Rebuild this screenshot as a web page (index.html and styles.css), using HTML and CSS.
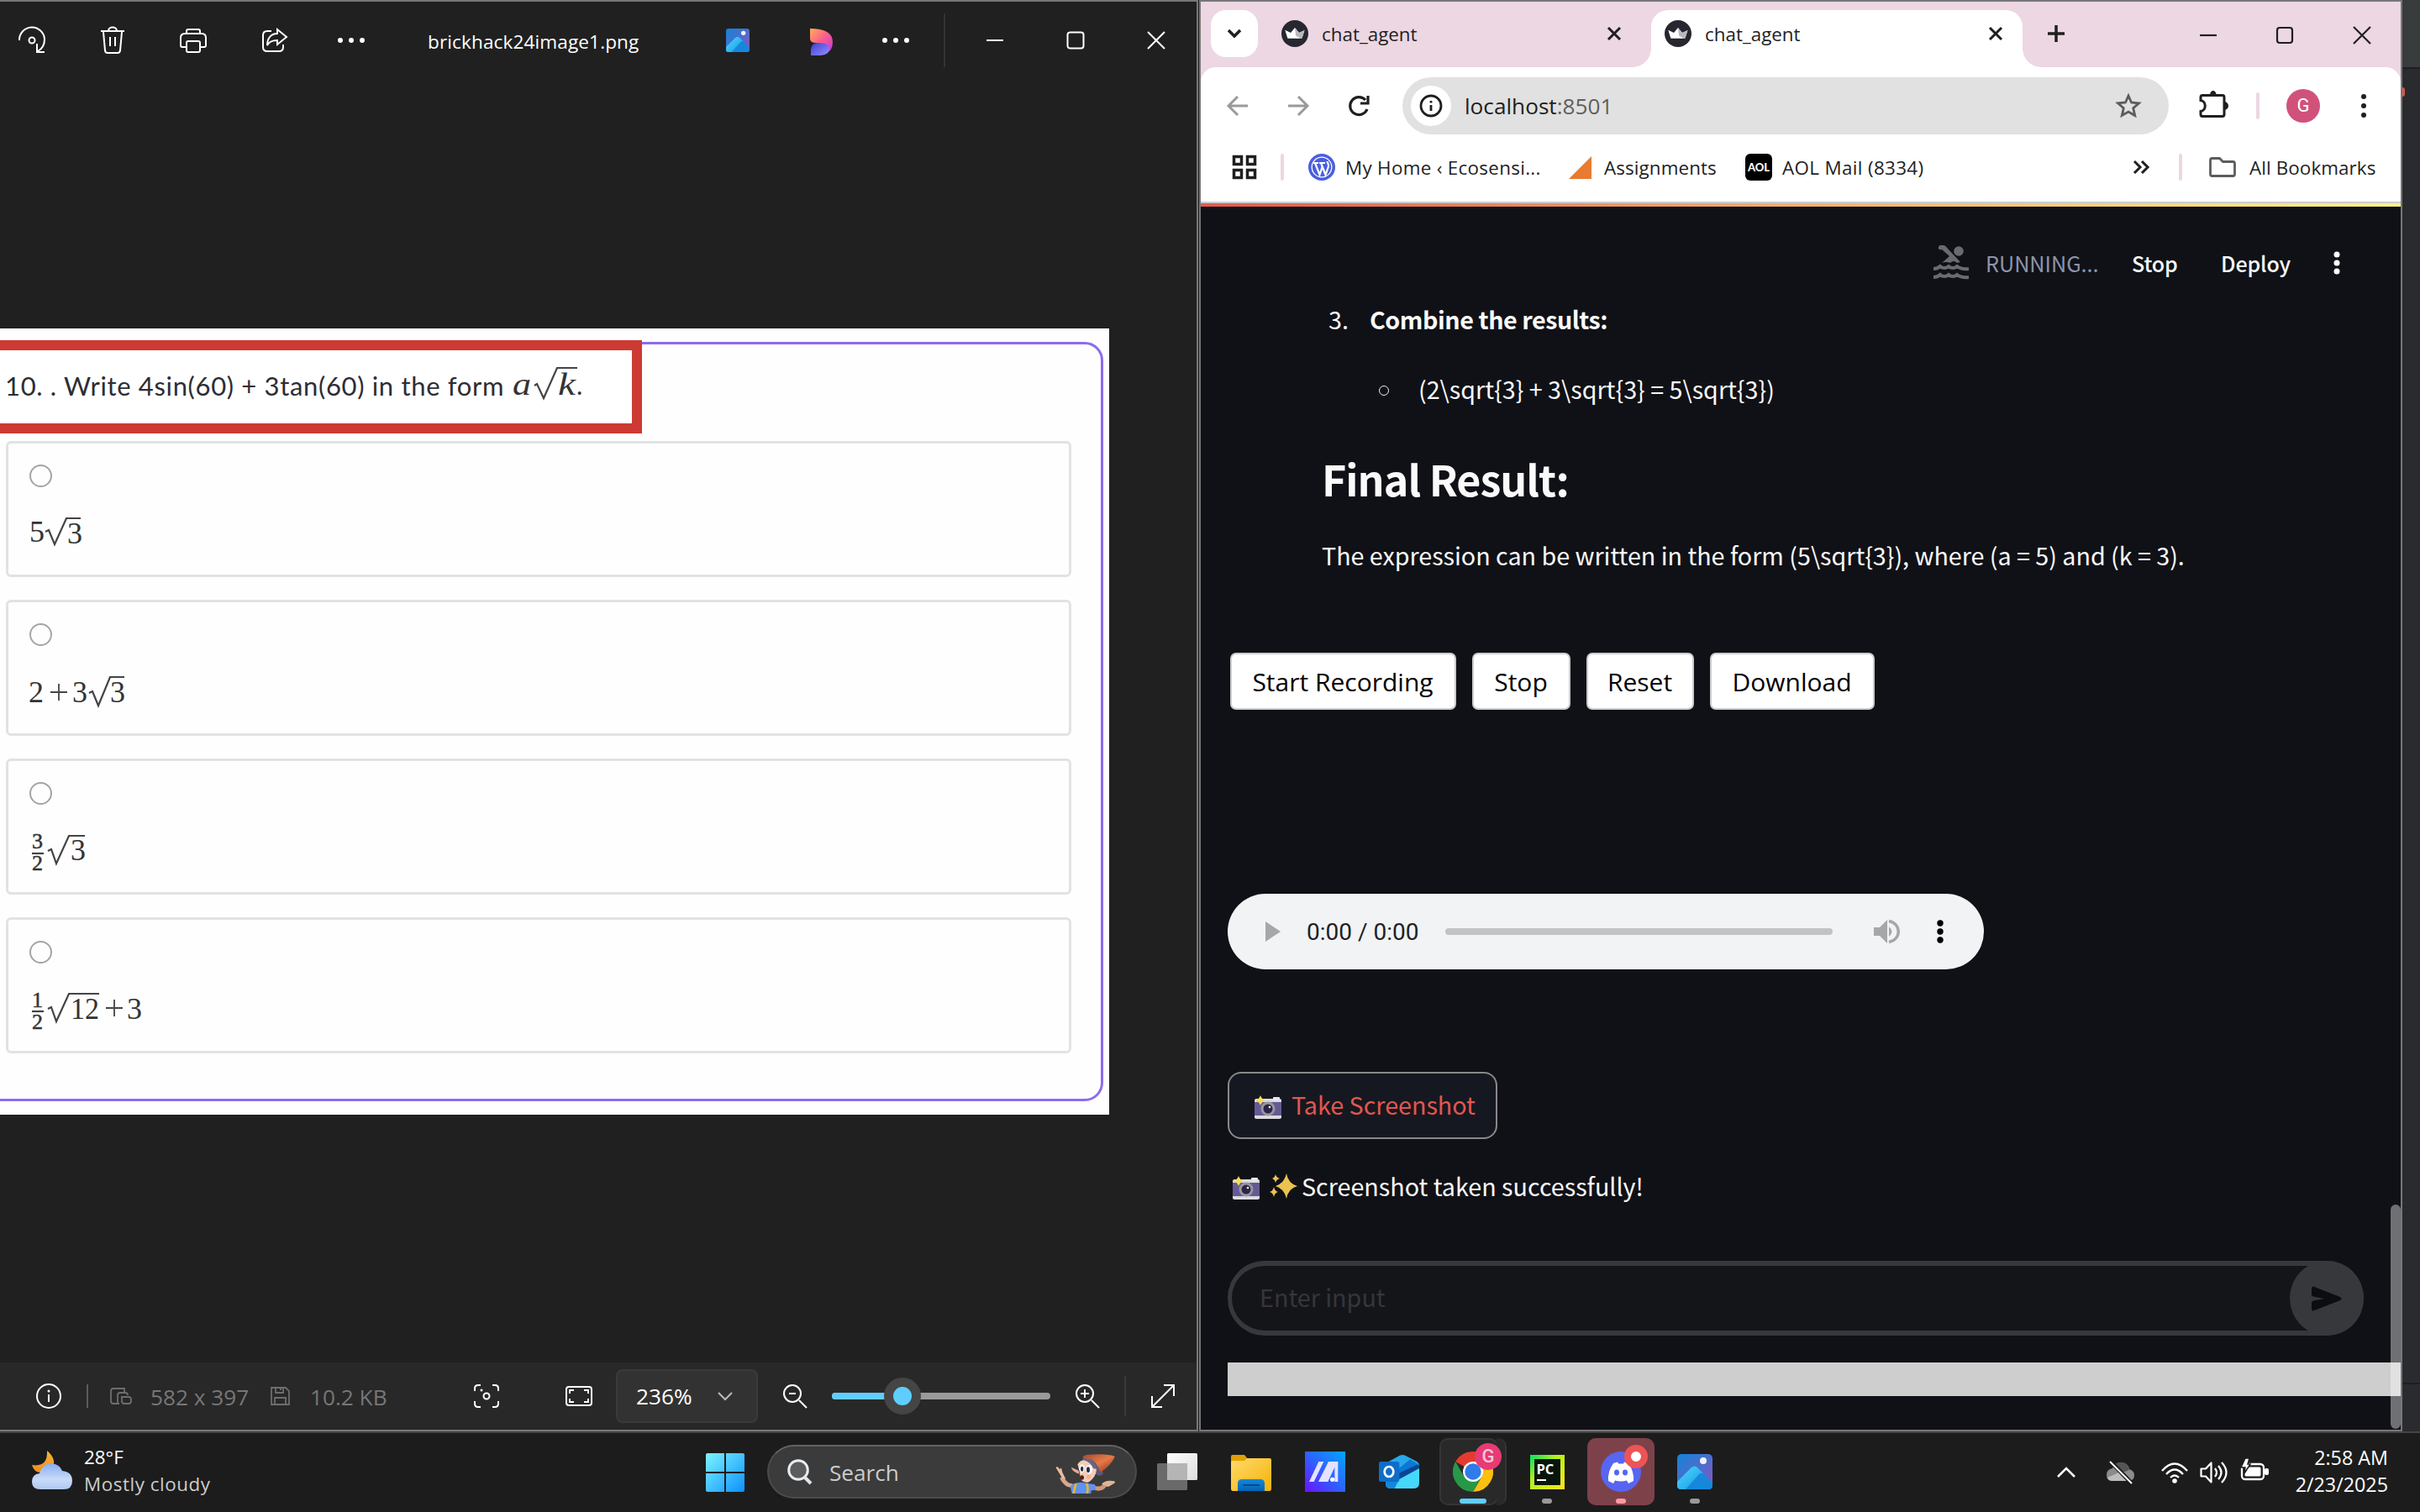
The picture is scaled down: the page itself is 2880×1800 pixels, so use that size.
FILE: index.html
```
<!DOCTYPE html>
<html lang="en">
<head>
<meta charset="utf-8">
<title>Desktop</title>
<link rel="stylesheet" href="styles.css">
</head>
<body>
<svg class="defs" width="0" height="0" aria-hidden="true">
  <defs>
    <linearGradient id="gPhoto" x1="0" y1="0" x2="1" y2="1"><stop offset="0" stop-color="#1184d8"/><stop offset="1" stop-color="#8a55c0"/></linearGradient>
    <linearGradient id="gHill" x1="0" y1="0" x2="1" y2="1"><stop offset="0" stop-color="#4fdcff"/><stop offset="1" stop-color="#1595e6"/></linearGradient>
    <linearGradient id="gWarm" x1="0" y1="0" x2="1" y2="1"><stop offset="0" stop-color="#ffae57"/><stop offset=".5" stop-color="#fb5c8c"/><stop offset="1" stop-color="#b836e8"/></linearGradient>
    <linearGradient id="gCool" x1="0" y1="0" x2="1" y2="1"><stop offset="0" stop-color="#3a3fd0"/><stop offset="1" stop-color="#9a8dff"/></linearGradient>
    <linearGradient id="gWin" gradientUnits="userSpaceOnUse" x1="0" y1="0" x2="46" y2="46"><stop offset="0" stop-color="#7df3ff"/><stop offset="1" stop-color="#0a92ff"/></linearGradient>
    <linearGradient id="gMoon" x1="0" y1="0" x2="0" y2="1"><stop offset="0" stop-color="#f2b93a"/><stop offset="1" stop-color="#f08a1c"/></linearGradient>
    <linearGradient id="gCloud" x1="0" y1="0" x2="0" y2="1"><stop offset="0" stop-color="#86aef0"/><stop offset=".6" stop-color="#c9dbf8"/><stop offset="1" stop-color="#b0c8f2"/></linearGradient>
    <linearGradient id="gFolder" x1="0" y1="0" x2="1" y2="1"><stop offset="0" stop-color="#ffda6b"/><stop offset="1" stop-color="#f5b20a"/></linearGradient>
    <linearGradient id="gPad" x1="0" y1="0" x2="0" y2="1"><stop offset="0" stop-color="#1488dc"/><stop offset="1" stop-color="#0463b5"/></linearGradient>
    <linearGradient id="gAsus" x1="0" y1="1" x2="1" y2="0"><stop offset="0" stop-color="#6a12ff"/><stop offset=".5" stop-color="#2e62ff"/><stop offset="1" stop-color="#00a8ff"/></linearGradient>
    <linearGradient id="gHat" x1="0" y1="0" x2="1" y2="1"><stop offset="0" stop-color="#a34a2a"/><stop offset=".5" stop-color="#e57a4a"/><stop offset="1" stop-color="#8c2c10"/></linearGradient>
    <linearGradient id="gPane" x1="0" y1="0" x2="1" y2="1"><stop offset="0" stop-color="#ffffff"/><stop offset="1" stop-color="#dddddd"/></linearGradient>
    <symbol id="crown" viewBox="0 0 32 32"><circle cx="16" cy="16" r="16" fill="#262730"/><path d="M4.5 12l6.5 3L16 9l5 6 6.5-3-3 9.5h-17z" fill="#fff"/><path d="M16 9l5 6 6.5-3-3 9.5h-7z" fill="#b9b9bd"/><path d="M4.5 12l18 9.500h-15z" fill="#fff"/></symbol>
    <symbol id="pic" viewBox="0 0 42 42"><g stroke="none"><rect width="42" height="42" rx="5" fill="url(#gPhoto)"/><circle cx="31" cy="8" r="4" fill="#f0f4fa"/><path d="M0 34L17 16q4-3 7 0l18 18v4q0 4-5 4H5q-5 0-5-4z" fill="#1688dc"/><path d="M0 33L17 16q4-3 7 0l7 7q-3-1-5 1L10 42H5q-5 0-5-4z" fill="url(#gHill)"/></g></symbol>
    <symbol id="cam" viewBox="0 0 32 28"><rect y="4" width="32" height="24" rx="2" fill="#dcdbe0"/><rect x="22" y="2" width="8" height="4" rx="1" fill="#e8e8ea"/><rect y="8" width="32" height="16" fill="#655a96"/><circle cx="16" cy="16" r="8.500" fill="#98979c"/><circle cx="16" cy="16" r="5.500" fill="#2c2547"/><circle cx="18" cy="14" r="1.300" fill="#fff"/><path d="M7 0q1.500 4.500 6 6-4.500 1.500-6 6-1.500-4.500-6-6 4.500-1.500 6-6z" fill="#f6da5f"/></symbol>
  </defs>
</svg>

<div class="desktop">
  <section class="photos">
    <header class="ph-title">
      <svg class="ic" viewBox="-24 -24 48 48"><path d="M-15 0A15 15 0 0 1 15-1C15 5 12 10 7 13M6 4v10h9"/><circle r="3.500"/></svg>
      <svg class="ic" viewBox="-24 -24 48 48"><path d="M-14-11h28M-5-11c0-6 10-6 10 0M-11-10l2 22q.5 3 3 3H6q2.500 0 3-3l2-22M-3-4V7M3-4V7"/></svg>
      <svg class="ic" viewBox="-24 -24 48 48"><path d="M-8-8v-3q0-2 2-2H6q2 0 2 2v3M-8 8h-5q-2 0-2-2v-9q0-5 5-5H10q5 0 5 5v9q0 2-2 2H8"/><rect x="-8" y="1" width="16" height="13" rx="2"/></svg>
      <svg class="ic" viewBox="-24 -24 48 48"><path d="M-3-11h-5q-5 0-5 5V8q0 5 5 5H6q5 0 5-5V5M4-13L15-4 4 5V0C-2 0-6 2-8 6-8-2-4-8 4-8z"/></svg>
      <svg class="ic m-dots" viewBox="-24 -24 48 48"><g class="solid"><circle cx="-13" r="3"/><circle r="3"/><circle cx="13" r="3"/></g></svg>
      <span class="ph-name">brickhack24image1.png</span>
      <svg class="ic m-pic" viewBox="-24 -24 48 48"><use href="#pic" x="-14" y="-14" width="28" height="28"/></svg>
      <svg class="ic m-des" viewBox="-24 -24 48 48"><path stroke="none" fill="url(#gWarm)" d="M-13-14Q14-14 14 2q0 11-8 13Q4 4-6 3q-7 0-7-5z"/><path stroke="none" fill="url(#gCool)" d="M-12 18V12Q-12 3-3 3 10 3 10 10 10 18-4 18z"/></svg>
      <svg class="ic m-dots2" viewBox="-24 -24 48 48"><g class="solid"><circle cx="-13" r="3"/><circle r="3"/><circle cx="13" r="3"/></g></svg>
      <i class="vline"></i>
      <svg class="ic m-min" viewBox="-24 -24 48 48"><path d="M-10 0H10"/></svg>
      <svg class="ic m-max" viewBox="-24 -24 48 48"><rect x="-9.500" y="-9.500" width="19" height="19" rx="3"/></svg>
      <svg class="ic m-cls" viewBox="-24 -24 48 48"><path d="M-10-10L10 10M10-10L-10 10"/></svg>
    </header>

    <div class="canvas">
      <div class="sheet">
        <div class="frame"></div>
        <div class="question"><span class="q-text">10. . Write 4sin(60) + 3tan(60) in the form</span><svg class="math" width="90" height="60" viewBox="608 430 90 60"><text class="it" x="610" y="471" textLength="22" lengthAdjust="spacingAndGlyphs">a</text><path d="M636 460l3-2 8 17 16-36h24" /><text class="it" x="664" y="471" textLength="21" lengthAdjust="spacingAndGlyphs">k</text><text x="686" y="471" class="dot">.</text></svg></div>
        <div class="choices">
          <div class="choice"><i class="radio"></i><svg class="math" width="200" height="70" viewBox="30 608 200 70"><text x="35" y="646">5</text><path d="M54 634l4-2 7 17 14-31h17"/><text x="80" y="648">3</text></svg></div>
          <div class="choice"><i class="radio"></i><svg class="math" width="200" height="70" viewBox="30 797 200 70"><text x="34" y="837">2</text><path class="plus" d="M60 825h20M70 815v20"/><text x="86" y="837">3</text><path d="M106 826l4-2 7 17 14-34h17"/><text x="131" y="837">3</text></svg></div>
          <div class="choice"><i class="radio"></i><svg class="math" width="200" height="70" viewBox="30 986 200 70"><text class="sm" x="38" y="1011">3</text><path d="M38 1017h14"/><text class="sm" x="38" y="1037">2</text><path d="M57 1014l4-2 6 17 15-33h19"/><text x="84" y="1025">3</text></svg></div>
          <div class="choice"><i class="radio"></i><svg class="math" width="200" height="70" viewBox="30 1175 200 70"><text class="sm" x="38" y="1200">1</text><path d="M38 1205h14"/><text class="sm" x="38" y="1226">2</text><path d="M57 1202l4-2 6 17 15-33h36"/><text x="84" y="1214" textLength="34" lengthAdjust="spacingAndGlyphs">12</text><path class="plus" d="M126 1201h20M136 1191v20"/><text x="151" y="1214">3</text></svg></div>
        </div>
      </div>
    </div>

    <footer class="ph-bar">
      <svg class="ic" viewBox="-24 -24 48 48"><circle r="14"/><path d="M0-2V7"/><circle class="solid" cy="-6" r="1.500"/></svg>
      <i class="vline a"></i>
      <svg class="ic dim b" viewBox="-24 -24 48 48"><path d="M-2 9h-7q-3 0-3-3V-6q0-3 3-3H4v5M-4 9V-1q0-3 3-3H5q3 0 3 3M1 1h8q3 0 3 3v2q0 3-3 3H4q-3 0-3-3z"/></svg>
      <span class="dimtext w1">582 x 397</span>
      <svg class="ic dim c" viewBox="-24 -24 48 48"><path d="M-10-10H7l4 4V10h-21zM-6 10V2H7v8M-5-10v6H4v-6M1-10v3"/></svg>
      <span class="dimtext w2">10.2 KB</span>
      <svg class="ic d" viewBox="-24 -24 48 48"><path d="M-14-6v-3q0-4 4-4h3M7-13h3q4 0 4 4v3M14 6v3q0 4-4 4H7M-7 13h-3q-4 0-4-4V6"/><circle r="3.500"/><circle class="solid" cx="-6" cy="-7" r="1.500"/></svg>
      <svg class="ic e" viewBox="-24 -24 48 48"><rect x="-15" y="-11" width="30" height="22" rx="3"/><path d="M-11-3v-4h5M6-7h5v4M11 3v4H6M-6 7h-5V3"/></svg>
      <div class="zoom"><span>236%</span><svg width="18" height="12" viewBox="0 0 18 12"><path d="M1 2l8 8 8-8" fill="none" stroke="#bbb" stroke-width="2"/></svg></div>
      <svg class="ic f" viewBox="-24 -24 48 48"><circle cx="-3" cy="-3" r="10"/><path d="M5 5l9 9M-7-3h8"/></svg>
      <div class="slider"><i class="fill"></i><i class="thumb"></i></div>
      <svg class="ic g" viewBox="-24 -24 48 48"><circle cx="-3" cy="-3" r="10"/><path d="M5 5l9 9M-8-3h10M-3-8v10"/></svg>
      <i class="vline h"></i>
      <svg class="ic k" viewBox="-24 -24 48 48"><path d="M-13 13L13-13M1-13h12V0M-13 0v13h12"/></svg>
    </footer>
  </section>

  <section class="chrome">
    <div class="tabs">
      <div class="tabmenu"><svg width="20" height="14" viewBox="0 0 20 14"><path d="M3 3l7 7 7-7" fill="none" stroke="#1f1f1f" stroke-width="3.500"/></svg></div>
      <div class="tab idle"><svg class="fav"><use href="#crown"/></svg><span>chat_agent</span><svg class="x" viewBox="-9 -9 18 18"><path d="M-7-7L7 7M7-7L-7 7"/></svg></div>
      <div class="tab active"><svg class="fav"><use href="#crown"/></svg><span>chat_agent</span><svg class="x" viewBox="-9 -9 18 18"><path d="M-7-7L7 7M7-7L-7 7"/></svg></div>
      <svg class="ck t1" viewBox="-24 -24 48 48"><path d="M-10 0H10M0-10V10" stroke-width="3.500"/></svg>
      <svg class="ck t2" viewBox="-24 -24 48 48"><path d="M-10 1H10"/></svg>
      <svg class="ck t3" viewBox="-24 -24 48 48"><rect x="-9" y="-8" width="18" height="18" rx="3"/></svg>
      <svg class="ck t4" viewBox="-24 -24 48 48"><path d="M-10-9L10 11M10-9L-10 11"/></svg>
    </div>
    <div class="toolbar">
      <svg class="ck n1" viewBox="-24 -24 48 48"><path stroke="#9a9a9a" stroke-width="3" d="M12 0H-10M0-11L-11 0 0 11"/></svg>
      <svg class="ck n2" viewBox="-24 -24 48 48"><path stroke="#9a9a9a" stroke-width="3" d="M-12 0H10M0-11L11 0 0 11"/></svg>
      <svg class="ck n3" viewBox="-24 -24 48 48"><path stroke-width="3.200" d="M10 4A10.500 10.500 0 1 1 8-7M11-12v9H2"/></svg>
      <div class="omnibox">
        <div class="site"><svg class="ck" viewBox="-24 -24 48 48"><circle r="12" stroke-width="2.800"/><path stroke-width="2.800" d="M0-1V6M0-6v2.500"/></svg></div>
        <span class="url">localhost<em>:8501</em></span>
        <svg class="ck star" viewBox="-24 -24 48 48"><path stroke="#5c5c5c" stroke-width="2.800" d="M0-12l3.500 8 9 .8-6.800 6 2 8.700L0 7l-7.700 4.500 2-8.700-6.800-6 9-.8z"/></svg>
      </div>
      <svg class="ck n4" viewBox="-24 -24 48 48"><path stroke-width="3" d="M-15-10q0-2.500 2-2.500h24q2 0 2 2.500V10q0 2.500-2 2.500h-24q-2 0-2-2.500V6.500c7-1 7-12 0-13z"/><path class="fillk" d="M-4-13a3.800 5 0 0 1 7.600 0zM13-5a5 5 0 0 1 0 10z"/></svg>
      <i class="pink p1"></i>
      <span class="avatar">G</span>
      <svg class="ck n5" viewBox="-24 -24 48 48"><g class="fillk"><circle cy="-11" r="3"/><circle r="3"/><circle cy="11" r="3"/></g></svg>
    </div>
    <div class="marks">
      <svg class="ck b1" viewBox="-24 -24 48 48"><path stroke-width="3.500" d="M-12.500-12.500h9v9h-9zM3.500-12.500h9v9h-9zM-12.500 3.500h9v9h-9zM3.500 3.500h9v9h-9z"/></svg>
      <i class="pink p2"></i>
      <svg class="b2" width="32" height="32" viewBox="0 0 32 32"><circle cx="16" cy="16" r="16" fill="#4a5fe0"/><circle cx="16" cy="16" r="11.800" fill="none" stroke="#fff" stroke-width="1.300"/><path d="M6 11h6M13 11h7M8 11l5.500 14L16.500 16M15 11l5.500 14L24 15c.6-3-1.500-3.500-1.500-6" fill="none" stroke="#fff" stroke-width="2.200"/></svg>
      <span class="bw1">My Home ‹ Ecosensi...</span>
      <svg class="b3" width="27" height="27" viewBox="0 0 27 27"><path d="M27 0v27H0z" fill="#e87b2f"/></svg>
      <span class="bw2">Assignments</span>
      <span class="aol">AOL</span>
      <span class="bw3">AOL Mail (8334)</span>
      <svg class="ck b4" viewBox="-24 -24 48 48"><path stroke-width="3" d="M-8-7l7 7-7 7M1-7l7 7-7 7"/></svg>
      <i class="pink p3"></i>
      <svg class="ck b5" viewBox="-24 -24 48 48"><path stroke="#5c5c5c" stroke-width="2.800" d="M-14.500-8q0-2.500 2-2.500h9l4 4h12q2 0 2 2.500V8q0 2.500-2 2.500h-25q-2 0-2-2.500z"/></svg>
      <span class="bw4">All Bookmarks</span>
    </div>
    <div class="page">
      <div class="status">
        <svg class="swim" width="44" height="42" viewBox="0 0 44 42"><circle cx="31" cy="7" r="5.800" fill="#6a6b70"/><path d="M9 0q6-1 8 3l16 17-4 1q-4-4-8 0-5-2-10 0l9-8-9-8q-5 1-4-3 1-2 2-2z" fill="#6a6b70"/><path d="M1 28q5 0 8-3 5 4 10 0 5 4 10 0 5 4 14 3M1 38q5 0 8-3 5 4 10 0 5 4 10 0 5 4 14 3" stroke="#6a6b70" stroke-width="4" fill="none"/></svg>
        <span class="run">RUNNING...</span>
        <span class="st1">Stop</span>
        <span class="st2">Deploy</span>
        <svg class="kebab" width="8" height="28" viewBox="0 0 8 28"><g fill="#fff"><circle cx="4" cy="4" r="3.500"/><circle cx="4" cy="14" r="3.500"/><circle cx="4" cy="24" r="3.500"/></g></svg>
      </div>
      <div class="li"><span class="num">3.</span><b>Combine the results:</b></div>
      <div class="li sub"><i class="ring"></i><span>(2\sqrt{3} + 3\sqrt{3} = 5\sqrt{3})</span></div>
      <h2>Final Result:</h2>
      <p class="para">The expression can be written in the form (5\sqrt{3}), where (a = 5) and (k = 3).</p>
      <div class="buttons"><button class="q1">Start Recording</button><button class="q2">Stop</button><button class="q3">Reset</button><button class="q4">Download</button></div>
      <div class="audio">
        <svg class="play" width="18" height="24" viewBox="0 0 18 24"><path d="M0 0l18 12L0 24z" fill="#a5a7a8"/></svg>
        <span>0:00 / 0:00</span><i class="track"></i>
        <svg class="vol" width="31" height="30" viewBox="0 0 31 30"><path d="M0 10h7l9-9v28l-9-9H0z" fill="#a5a7a8"/><path d="M18 9q7 6 0 12z" fill="#a5a7a8"/><path d="M18 2.500c15 3 15 22 0 25" stroke="#a5a7a8" stroke-width="3.500" fill="none"/></svg>
        <svg class="ad" width="8" height="28" viewBox="0 0 8 28"><circle cx="4" cy="4" r="3.700"/><circle cx="4" cy="14" r="3.700"/><circle cx="4" cy="24" r="3.700"/></svg>
      </div>
      <div class="shot"><svg class="cam"><use href="#cam"/></svg><span>Take Screenshot</span></div>
      <div class="done"><svg class="cam"><use href="#cam"/></svg><svg class="spark" width="33" height="30" viewBox="0 0 33 30"><path d="M20 0q2 12 13 15-11 3-13 15-3-12-13-15 10-3 13-15zM7 1q1 4 5 5-4 1-5 5-1-4-4-5 3-1 4-5zM5 16q1 5 5 6-4 1-5 6-1-5-5-6 4-1 5-6z" fill="#ecc351"/></svg><span>Screenshot taken successfully!</span></div>
      <div class="input"><span>Enter input</span><div class="send"><svg width="36" height="30" viewBox="0 0 36 30"><path d="M2 0.500L34 13q3 2 0 4L2 29.500q-2 0-2-3V20q0-2 2-2.500L15 15 2 12.500Q0 12 0 10V3.500q0-3 2-3z" fill="#0c0d11"/></svg></div></div>
      <div class="strip"></div>
      <i class="scroll"></i>
    </div>
  </section>
  <aside class="behind"><i class="red"></i></aside>

  <nav class="taskbar">
    <svg class="weather" width="48" height="46" viewBox="0 0 48 46"><path d="M18 0Q32 12 22 24L12 26Q3 27 0 17 19 20 18 0z" fill="url(#gMoon)"/><path d="M10 46Q0 46 0 37q0-9 9-10Q12 15 23 15.500q10 0 13 8.500 12 1 12 12 0 10-10 10z" fill="url(#gCloud)"/></svg>
    <div class="wtext"><span>28°F</span><span class="sub2">Mostly cloudy</span></div>
    <svg class="start" width="46" height="46" viewBox="0 0 46 46"><path fill="url(#gWin)" d="M2 0h20v22H0V2q0-2 2-2zM24 0h20q2 0 2 2v20H24zM0 24h22v22H2q-2 0-2-2zM24 24h22v20q0 2-2 2H24z"/></svg>
    <div class="search">
      <svg class="mag" width="30" height="31" viewBox="0 0 30 31"><circle cx="13" cy="13" r="11.300" fill="#5a5c5e" stroke="#e8ecf0" stroke-width="3"/><path d="M21 22l7 7" stroke="#e0e5ea" stroke-width="4"/></svg>
      <span>Search</span>
      <svg class="puppet" width="74" height="48" viewBox="20 72 222 144">
        <path d="M88 190L66 184Q50 172 46 158" stroke="#d8a68c" stroke-width="15" fill="none"/><path d="M48 162L24 122q10-4 14 8l6-6 4 16 12 24z" fill="#e8bda2"/>
        <path d="M160 194q24 12 40-8l20-8" stroke="#cf977c" stroke-width="15" fill="none"/><path d="M188 182q14-16 46-10l2 6-24 14z" fill="#e3b497"/>
        <path d="M76 190q14-14 40-14l48 8 4 18-18 4v10H82z" fill="#5f92f2"/>
        <path d="M96 180l-8 36M134 180q8 16 2 36" stroke="#f0b429" stroke-width="8" fill="none"/>
        <path d="M120 90q36-10 64 20l10 36q-16 12-24 2z" fill="#5d5678"/>
        <path d="M102 112q10-18 34-16 30 6 34 34-2 30-30 46-26 2-28-20l-4-24z" fill="#f2cdb8"/><path d="M106 134l-26-12q0 14 28 24z" fill="#eaa793"/>
        <ellipse cx="118" cy="127" rx="9" ry="15" fill="#fff"/><ellipse cx="143" cy="130" rx="12" ry="16" fill="#fff"/><ellipse cx="118" cy="128" rx="5" ry="9" fill="#27304a"/><ellipse cx="140" cy="131" rx="6" ry="10" fill="#27304a"/>
        <ellipse cx="118" cy="159" rx="7" ry="8" fill="#5a1f14"/><circle cx="142" cy="157" r="8" fill="#f5a090" opacity=".6"/>
        <path d="M120 84q6 12 30 10 20 8 34 46Q220 118 236 84 210 72 132 78z" fill="url(#gHat)"/><path d="M120 90q24 2 34 6 14 14 20 34l-16-4q-8-22-36-30z" fill="#6b6488"/>
      </svg>
    </div>
    <svg class="view" width="48" height="44" viewBox="0 0 48 44"><rect x="12" width="36" height="32" rx="1.500" fill="url(#gPane)"/><rect y="12" width="36" height="32" rx="1.500" fill="#6a6a6a"/><path d="M12 12h24v20H12z" fill="#b5b5b5"/></svg>
    <svg class="expl" width="48" height="43" viewBox="0 0 48 43"><path d="M0 2q0-2 2-2h14l4 5v6H0z" fill="#e0a000"/><path d="M0 9q0-2 2-2h14l3-3h27q2 0 2 2v34q0 3-2 3H2q-2 0-2-3z" fill="url(#gFolder)"/><path d="M8 43V34q0-5 5-5h22q5 0 5 5v9z" fill="url(#gPad)"/><path d="M14 36h20" stroke="#06468a" stroke-width="2"/></svg>
    <svg class="asus" width="48" height="48" viewBox="909 66 144 144"><path d="M909 66h144v144H909z" fill="url(#gAsus)"/><path d="M924 174l34-72h18l-35 72zM957 174l36-72h34v72h-12V122l-24 52z" fill="#e3e2ff"/><circle cx="1007" cy="166" r="8" fill="#fff"/></svg>
    <svg class="outl" width="48" height="40" viewBox="1173 78 144 120"><path d="M1197 108l50-28q10-4 20 0l42 22q8 5 8 14l-60 34-60 30z" fill="#28a8ea"/><path d="M1238 132l46-38 28 18-70 48z" fill="#0a78d4"/><path d="M1238 146l74-34q12 12-4 24l-62 40z" fill="#0a4494"/><path d="M1197 160l50 4 70-38v52q0 20-18 20h-84q-18 0-18-18z" fill="#45d8fa"/><path d="M1197 170h46l-14 28h-14q-18 0-18-18z" fill="#1487dc"/><rect x="1173" y="102" width="73" height="72" rx="6" fill="#0f6cc8"/><ellipse cx="1209" cy="138" rx="16" ry="18" fill="none" stroke="#fff" stroke-width="8"/></svg>
    <div class="tile chr"><i class="stack"></i>
      <svg width="48" height="48" viewBox="-24 -24 48 48"><path d="M0 0L-20.800-12A24 24 0 0 1 20.800-12z" fill="#e33b2e"/><path d="M0-12H20.800A24 24 0 0 1 0 24L10.400 6z" fill="#fdc010"/><path d="M-20.800-12L-10 7 10 6 0 24A24 24 0 0 1-20.800-12z" fill="#279847"/><circle r="12" fill="#fff"/><circle r="9.700" fill="#2f7be9"/></svg>
      <span class="badge">G</span><i class="under wide"></i></div>
    <div class="tile pyc"><div class="pc"><span>PC</span><i></i></div><i class="under"></i></div>
    <div class="tile disc">
      <svg width="48" height="48" viewBox="-24 -24 48 48"><circle r="24" fill="#5865f2"/><path d="M-9-10l5-1.500 1 2h6l1-2 5 1.500q7 10 6 21l-6 3-2-3.500q-7 2-14 0l-2 3.500-6-3q-1-11 6-21z" fill="#fff"/><ellipse cx="-5" cy="1" rx="3" ry="3.400" fill="#5865f2"/><ellipse cx="5" cy="1" rx="3" ry="3.400" fill="#5865f2"/></svg>
      <span class="live"></span><i class="under rose"></i></div>
    <div class="tile phs"><svg width="42" height="42"><use href="#pic"/></svg><i class="under"></i></div>
    <svg class="up" width="22" height="14" viewBox="0 0 22 14"><path d="M1 12L11 2l10 10" fill="none" stroke="#fff" stroke-width="2.500"/></svg>
    <svg class="cloud" width="34" height="32" viewBox="0 0 34 32"><path d="M7 26q-7 0-7-7 0-7 7-8Q10 4 17 4q8 0 10 8 6 2 6 7 0 7-7 7z" fill="#8b8b8b"/><path d="M7 26q-5 0-6-4l16-7 13 10-4 1z" fill="#bcbcbc"/><path d="M10 7q8-7 15 1l2 5-8 3z" fill="#555"/><path d="M4 2l26 27" stroke="#1c1c1c" stroke-width="5"/><path d="M4 3l26 26" stroke="#fff" stroke-width="2"/></svg>
    <svg class="wifi" width="34" height="26" viewBox="0 0 34 26"><path d="M2 11Q17-6 32 11M7 15q10-11 20 0M12 19q5-5 10 0" fill="none" stroke="#fff" stroke-width="2.300"/><circle cx="17" cy="23" r="2.800" fill="#fff"/></svg>
    <svg class="snd" width="34" height="28" viewBox="0 0 34 28"><path d="M1.500 9.500H7l6.500-7v23L7 18.500H1.500zM18 9q4 5 0 10M22 6q7 8 0 16M26 2q11 12 0 24" fill="none" stroke="#fff" stroke-width="2.200" stroke-linejoin="round"/></svg>
    <svg class="bat" width="34" height="28" viewBox="0 0 34 28"><rect x="2" y="7" width="26" height="18" rx="4" fill="none" stroke="#fff" stroke-width="2.300"/><rect x="5.500" y="10.500" width="19" height="11" rx="1.500" fill="#fff"/><rect x="29" y="12" width="5" height="8" rx="2" fill="#fff"/><path d="M6 0l5 0-2 7h3L5 18l1-7H1z" fill="#fff" stroke="#1c1c1c" stroke-width="1.500"/></svg>
    <div class="clock"><span>2:58 AM</span><span>2/23/2025</span></div>
  </nav>
</div>
</body>
</html>
```

FILE: styles.css
```
* { box-sizing: border-box; }
body { margin: 0; background: #1c1c1c; font-family: "Open Sans", "Noto Sans", sans-serif; overflow: hidden; }
svg { display: block; flex: none; }
i, em { font-style: normal; flex: none; }
span { white-space: nowrap; flex: none; }
.defs { position: absolute; }
.desktop { width: 2880px; height: 1800px; display: grid; grid-template-columns: 1427px 1432px 21px; grid-template-rows: 1704px 96px; }

/* Photos window */
.photos { width: 1426px; height: 1704px; background: #202020; border: solid #777; border-width: 2px 2px 2px 0; display: flex; flex-direction: column; }
.ic { width: 48px; height: 48px; fill: none; stroke: #fff; stroke-width: 2; }
.ic .solid { fill: #fff; stroke: none; }
.ic.dim { stroke: #6e6e6e; stroke-width: 1.800; }
.ph-title { height: 92px; display: flex; align-items: center; padding-left: 14px; }
.ph-title .ic:nth-child(-n+4) { margin-right: 48px; }
.ph-title .m-dots { margin-left: -4px; }
.ph-name { width: 250px; margin-left: 67px; padding-top: 3px; color: #fff; font-size: 22.600px; letter-spacing: .1px; line-height: 32px; }
.m-pic { margin-left: 95px; }
.m-des { margin-left: 51px; }
.m-dots2 { margin-left: 41px; }
.vline { width: 2px; height: 64px; background: #333; margin-left: 33px; }
.m-min { margin-left: 35px; }
.m-max { margin-left: 48px; }
.m-cls { margin-left: 48px; }
.canvas { height: 1528px; padding-top: 297px; }
.sheet { position: relative; width: 1320px; height: 936px; background: #fefefe; padding-top: 14px; }
.frame { position: absolute; left: -30px; top: 16px; width: 1343px; height: 904px; border: 3px solid #8b6cf0; border-radius: 22px; }
.question { position: relative; width: 764px; height: 111px; border: solid #cc3a33; border-width: 12px 12px 12px 0; background: #fff; display: flex; align-items: center; padding: 0 0 3px 6px; }
.q-text { font: 31px/44px Lato, sans-serif; letter-spacing: .66px; color: #2d2d33; width: 602px; }
.math { overflow: visible; font: 36px "Liberation Serif", serif; fill: #333; }
.math path { fill: none; stroke: #444; stroke-width: 2.200; }
.math .plus { stroke-width: 1.800; }
.math .sm { font-size: 26px; stroke: #333; stroke-width: .5; }
.math .it { font-style: italic; font-size: 38px; }
.math .dot { font-family: Lato, sans-serif; font-size: 31px; }
.choices { position: relative; margin: 9px 0 0 7px; width: 1268px; display: flex; flex-direction: column; gap: 27px; }
.choice { height: 162px; border: 3px solid #e1e3e3; border-radius: 6px; background: #fefefe; padding: 25px 0 0 25px; }
.radio { display: block; width: 27px; height: 27px; border: 2.500px solid #a3a5a5; border-radius: 50%; }
.choice .math { margin: 27px 0 0 -5px; }
.ph-bar { height: 80px; background: #282828; display: flex; align-items: center; padding-left: 34px; color: #fff; }
.ph-bar .vline.a { height: 28px; background: #5c5c5c; margin-left: 21px; }
.ic.b { margin-left: 15px; }
.dimtext { color: #777; font-size: 26.200px; padding-top: 1px; }
.w1 { width: 117px; margin-left: 11px; }
.ic.c { margin-left: 13px; }
.w2 { width: 88px; margin-left: 12px; }
.ic.d { margin-left: 98px; }
.ic.e { margin-left: 62px; }
.zoom { width: 169px; height: 64px; margin-left: 20px; background: #323232; border: 2px solid #3a3a3a; border-radius: 8px; display: flex; align-items: center; padding-left: 22px; font-size: 26.200px; }
.zoom span { width: 97px; }
.ic.f { margin-left: 20px; }
.slider { position: relative; width: 260px; height: 8px; margin-left: 20px; background: #9a9a9a; border-radius: 4px; }
.slider .fill { display: block; width: 84px; height: 8px; background: #60cdff; border-radius: 4px; }
.slider .thumb { position: absolute; left: 62px; top: -18px; width: 44px; height: 44px; border-radius: 50%; border: 11px solid #454545; background: #60cdff; }
.ic.g { margin-left: 20px; }
.ph-bar .vline.h { height: 48px; background: #3a3a3a; margin-left: 20px; }
.ic.k { margin-left: 20px; }

/* Browser window */
.chrome { width: 1432px; height: 1704px; border: 2px solid #777; background: #ecd7e3; display: flex; flex-direction: column; color: #1f1f1f; }
.ck { width: 48px; height: 48px; fill: none; stroke: #1f1f1f; stroke-width: 2.200; }
.ck .fillk { fill: #1f1f1f; stroke: none; }
.tabs { height: 78px; display: flex; align-items: center; padding-left: 12px; font-size: 22.400px; }
.tabmenu { width: 56px; height: 56px; background: #fff; border-radius: 18px; display: flex; align-items: center; justify-content: center; margin-top: -2px; }
.tab { display: flex; align-items: center; height: 68px; margin-top: 10px; padding-bottom: 12px; }
.tab span { width: 328px; margin-left: 16px; line-height: 32px; padding-top: 2px; }
.tab.idle { width: 436px; margin-left: 28px; }
.tab.active { width: 442px; margin-left: 4px; padding-left: 16px; background: #fff; border-radius: 20px 20px 0 0; position: relative; }
.tab.active::before, .tab.active::after { content: ""; position: absolute; bottom: 0; width: 22px; height: 22px; }
.tab.active::before { left: -22px; background: radial-gradient(circle at 0 0, transparent 21.500px, #fff 22px); }
.tab.active::after { right: -22px; background: radial-gradient(circle at 100% 0, transparent 21.500px, #fff 22px); }
.fav { width: 32px; height: 32px; }
.tab .x { width: 18px; height: 18px; stroke: #1f1f1f; stroke-width: 3; margin-left: 11px; }
.tab.active .x { margin-left: 9px; }
.t1 { margin-left: 16px; margin-top: -2px; }
.t2 { margin-left: 133px; }
.t3 { margin-left: 43px; }
.t4 { margin-left: 44px; }
.toolbar { height: 92px; background: #fff; border-radius: 18px 18px 0 0; display: flex; align-items: center; padding-left: 20px; }
.n2 { margin-left: 24px; }
.n3 { margin-left: 24px; }
.omnibox { width: 912px; height: 68px; margin-left: 28px; background: #e1e1e1; border-radius: 34px; display: flex; align-items: center; padding-left: 10px; }
.site { width: 48px; height: 48px; border-radius: 50%; background: #fff; }
.url { width: 748px; margin-left: 16px; font-size: 26.200px; }
.url em { color: #5f5f5f; }
.star { margin-left: 18px; }
.n4 { margin-left: 29px; }
.pink { width: 4px; height: 32px; background: #ecd7e3; border-radius: 2px; }
.p1 { margin-left: 27px; }
.avatar { width: 40px; height: 40px; margin-left: 32px; border-radius: 50%; background: #d0527b; color: #fff; font: 22px/40px Roboto, sans-serif; text-align: center; }
.n5 { margin-left: 28px; }
.marks { height: 70px; padding-bottom: 14px; background: #fff; border-bottom: 2px solid #ccc; display: flex; align-items: center; padding-left: 28px; font-size: 22.400px; }
.marks > * { flex: none; }
.p2 { margin-left: 19px; }
.b2 { margin-left: 29px; }
.bw1 { margin-left: 12px; width: 232px; letter-spacing: .3px; }
.b3 { margin-left: 34px; }
.bw2 { margin-left: 15px; width: 134px; letter-spacing: .1px; }
.aol { margin-left: 34px; width: 32px; height: 32px; border-radius: 6px; background: #000; color: #fff; font: 900 13px/32px Lato, sans-serif; text-align: center; }
.bw3 { margin-left: 12px; width: 169px; letter-spacing: .35px; }
.b4 { margin-left: 234px; }
.p3 { margin-left: 21px; }
.b5 { margin-left: 24px; }
.bw4 { margin-left: 8px; width: 150px; letter-spacing: .1px; }
.page { position: relative; flex: 1; background: #101116; border-top: 4px solid transparent; border-image: linear-gradient(90deg, #e3594f, #f0b070 50%, #fbf38a) 1; border-width: 4px 0 0; color: #fafafa; font: 28.700px/44px "Noto Sans CJK SC", "Noto Sans", sans-serif; display: flex; flex-direction: column; align-items: flex-start; }
.status { height: 112px; padding-top: 22px; display: flex; align-items: center; }
.swim { margin-left: 871px; }
.run { margin-left: 19px; width: 174px; color: #8d94ac; font-size: 25.200px; }
.st1 { width: 106px; font-size: 25px; font-weight: 500; letter-spacing: -.1px; }
.st2 { width: 134px; font-size: 25px; font-weight: 500; letter-spacing: -.1px; }
.li { display: flex; align-items: center; height: 44px; }
.li b { letter-spacing: -.46px; }
.num { width: 49px; margin-left: 152px; }
.sub { margin-top: 39px; }
.ring { width: 12px; height: 12px; border: 1.500px solid #eee; border-radius: 50%; margin: 4px 35px 0 212px; }
h2 { margin: 49px 0 0 144px; height: 70px; font-size: 50.200px; line-height: 70px; font-weight: 600; white-space: nowrap; letter-spacing: -1px; }
.para { margin: 35px 0 0 144px; white-space: nowrap; letter-spacing: -.02px; }
.buttons { display: flex; gap: 19px; margin: 94px 0 0 35px; }
.buttons button { height: 68px; border: 2px solid #ccc; border-radius: 7px; background: #fff; color: #000; font: 30px "Open Sans", sans-serif; padding: 0 1px 0 0; text-align: center; }
.q1 { width: 269px; } .q2 { width: 117px; } .q3 { width: 128px; } .q4 { width: 196px; }
.audio { width: 900px; height: 90px; margin: 219px 0 0 32px; background: #f1f3f4; border-radius: 45px; display: flex; align-items: center; padding-left: 45px; color: #202124; font: 28px Roboto, sans-serif; }
.audio span { width: 134px; margin-left: 31px; }
.track { width: 461px; height: 8px; border-radius: 4px; background: #c1c3c4; margin-left: 31px; }
.vol { margin-left: 49px; }
.ad { margin-left: 44px; }
.cam { width: 32px; height: 28px; margin-top: 4px; }
.shot { width: 321px; height: 80px; margin: 122px 0 0 32px; border: 2px solid #888; border-radius: 16px; background: #151820; color: #e2574f; display: flex; align-items: center; padding-left: 30px; }
.shot span { margin: -3px 0 0 12px; }
.done { height: 44px; margin: 34px 0 0 38px; display: flex; align-items: center; }
.spark { margin-left: 12px; }
.done span { margin-left: 5px; }
.input { width: 1352px; height: 89px; margin: 67px 0 0 32px; background: #141519; border: solid #37383c; border-width: 6px 2px 6px 5px; border-radius: 44px; display: flex; align-items: center; justify-content: space-between; padding-left: 33px; color: #35363b; }
.input span { margin-top: -3px; }
.send { width: 88px; height: 89px; border-radius: 50%; background: #37383c; margin: -6px -2px; display: flex; align-items: center; padding-left: 26px; }
.strip { width: 1396px; height: 40px; margin: 32px 0 0 32px; background: #cecece; }
.scroll { position: absolute; right: 0; top: 1188px; width: 12px; height: 267px; border-radius: 6px; background: rgba(255,255,255,.4); }
.behind { background: linear-gradient(#383c3d 80px, #1d1e20 80px, #1d1e20 82px, #2a2b2e 82px, #2a2b2e 1646px, #1d1e20 1646px, #1d1e20 1648px, #2a2b2e 1648px); }
.red { display: block; width: 3px; height: 11px; margin-top: 104px; background: #d9534f; border-radius: 0 5px 5px 0; }

/* Taskbar */
.taskbar { grid-column: 1 / 4; background: #1c1c1c; border-top: 2px solid #444; display: flex; align-items: center; color: #fff; font-size: 22.400px; }
.weather { margin: -6px 0 0 38px; }
.wtext { margin-left: 14px; width: 152px; display: flex; flex-direction: column; line-height: 32.500px; margin-top: -4px; }
.sub2 { color: #ccc; letter-spacing: .55px; }
.start { margin-left: 588px; }
.search { margin: -2px 0 0 27px; width: 440px; height: 64px; border-radius: 32px; background: #3b3b3b; border: 2px solid #4b4b4b; border-top-color: #626262; display: flex; align-items: center; font-size: 26.200px; color: #ccc; }
.mag { margin-left: 22px; }
.search span { margin-left: 20px; width: 268px; padding-top: 1px; }
.puppet { margin-top: 4px; }
.view { margin: -2px 0 0 24px; }
.expl { margin-left: 40px; }
.asus { margin: -2px 0 0 40px; }
.outl { margin: -2px 0 0 40px; }
.tile { position: relative; width: 80px; height: 80px; margin: -2px 0 0 8px; border-radius: 10px; display: flex; align-items: center; justify-content: center; }
.outl + .tile { margin-left: 24px; }
.chr { width: 70px; background: #292929; border: 2px solid #353535; margin-right: 10px; padding-left: 10px; justify-content: flex-start; }
.chr > svg { margin-left: 4px; }
.stack { position: absolute; right: -12px; top: -2px; width: 12px; height: 80px; border-radius: 0 10px 10px 0; background: #292929; border-right: 2px solid #353535; }
.badge { position: absolute; left: 40px; top: 4px; width: 32px; height: 32px; border-radius: 50%; background: #e83a74; color: #f8c4d6; font: 500 22px/32px Roboto, sans-serif; text-align: center; }
.under { position: absolute; left: 34px; bottom: 2px; width: 12px; height: 6px; border-radius: 3px; background: #999; }
.under.wide { left: 22px; bottom: 0; width: 32px; background: #60cdff; }
.under.rose { background: #ff9aa2; }
.pc { width: 41px; height: 41px; background: #08150b; border: 5px solid; border-image: linear-gradient(135deg, #1de35a, #b6f01c 40%, #f3e61c) 1; padding: 2px 0 0 3px; font: bold 16.500px/20px "Open Sans", sans-serif; }
.pc i { display: block; width: 11px; height: 2px; background: #fff; margin-top: 2px; }
.disc { background: #7d4249; }
.live { position: absolute; left: 44px; top: 8px; width: 28px; height: 28px; border-radius: 50%; border: 8px solid #ed5555; background: #fff; }
.up { margin-left: 391px; }
.cloud { margin-left: 37px; }
.wifi { margin-left: 30px; }
.snd { margin-left: 13px; }
.bat { margin: -6px 0 0 14px; }
.clock { margin: -4px 38px 0 auto; display: flex; flex-direction: column; align-items: flex-end; line-height: 32.500px; font-size: 23.300px; }
```
